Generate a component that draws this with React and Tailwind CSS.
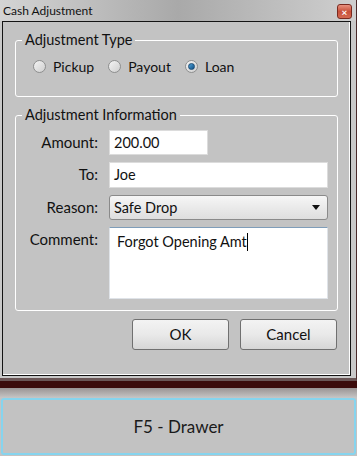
import React from 'react';

const font = { fontFamily: 'Lato, "Noto Sans", sans-serif' };

function Radio({ label, checked }) {
  return (
    <label className="flex items-center gap-[7px]">
      <span className="w-[13px] h-[13px] rounded-full border border-[#8e8f8f] bg-gradient-to-br from-[#f4f4f4] to-[#cfcfcf] flex items-center justify-center">
        {checked && <span className="w-[7px] h-[7px] rounded-full bg-gradient-to-br from-[#4fa3d8] to-[#0e4f86] border border-[#1b4b74]" />}
      </span>
      <span className="text-[14px] text-[#111]">{label}</span>
    </label>
  );
}

function Row({ label, children }) {
  return (
    <div className="flex gap-[11px]">
      <div className="w-[82px] text-right text-[15px] text-[#111] leading-[25px]">{label}</div>
      {children}
    </div>
  );
}

export default function App() {
  return (
    <div className="w-[357px] h-[456px] overflow-hidden bg-[#c3c3c3] flex flex-col" style={font}>
      {/* dialog over dark background */}
      <div className="h-[388px] bg-[#3b0b0b] flex flex-col">
        <div className="w-[357px] h-[381px] bg-[#c9c9c9] border-r border-[#4a2a2a] border-b-[3px] border-b-[#6a5656] flex flex-col">
          {/* title bar */}
          <div className="h-[21px] flex items-center justify-between pl-[3px] pr-[4px] bg-gradient-to-r from-[#d4d4d4] via-[#a9a9a9] to-[#cfcfcf]">
            <span className="text-[12px] text-[#111] leading-none">Cash Adjustment</span>
            <span className="w-[15px] h-[15px] mt-[2px] rounded-[3px] border border-[#7a2a20] bg-gradient-to-b from-[#e8917f] via-[#c8503a] to-[#d46a52] flex items-center justify-center text-white text-[10px] font-bold leading-none">
              ×
            </span>
          </div>

          {/* client area */}
          <div className="mx-[2px] w-[349px] h-[355px] border border-[#141414] bg-[#c3c3c3] shadow-[inset_-1px_-1px_0_#ffffff] px-[12px] pt-[9px] flex flex-col">
            <fieldset className="border border-white rounded-[3px] h-[66px]">
              <legend className="ml-[6px] px-[3px] text-[14.5px] text-[#111] leading-[18px]">Adjustment Type</legend>
              <div className="flex items-center gap-[14px] mt-[7px] pl-[17px]">
                <Radio label="Pickup" />
                <Radio label="Payout" />
                <Radio label="Loan" checked />
              </div>
            </fieldset>

            <fieldset className="mt-[9px] border border-white rounded-[3px] h-[205px] pr-[9px]">
              <legend className="ml-[6px] px-[3px] text-[14.5px] text-[#111] leading-[18px]">Adjustment Information</legend>
              <div className="flex flex-col gap-[7px] mt-[6px]">
                <Row label="Amount:">
                  <div className="w-[99px] h-[25px] bg-white border border-[#dcdcdc] px-[4px] text-[14.5px] leading-[23px] text-[#111]">200.00</div>
                </Row>
                <Row label="To:">
                  <div className="w-[219px] h-[26px] bg-white border border-[#dcdcdc] px-[4px] text-[14.5px] leading-[24px] text-[#111]">Joe</div>
                </Row>
                <Row label="Reason:">
                  <div className="w-[219px] h-[25px] rounded-[3px] border border-[#8a8a8a] bg-gradient-to-b from-[#f6f6f6] to-[#dedede] pl-[4px] pr-[7px] flex items-center justify-between text-[14.5px] text-[#111]">
                    <span>Safe Drop</span>
                    <svg width="8" height="5" viewBox="0 0 8 5"><path d="M0 0h8L4 5z" fill="#111" /></svg>
                  </div>
                </Row>
                <Row label="Comment:">
                  <div className="w-[219px] h-[72px] bg-white border border-[#dfe3e8] border-t-[#7f9db9] px-[7px] pt-[2px] text-[14.5px] leading-[24px] text-[#111] flex items-start">
                    <span>Forgot Opening Amt</span>
                    <span className="w-px h-[18px] bg-black mt-[3px]" />
                  </div>
                </Row>
              </div>
            </fieldset>

            <div className="flex justify-end gap-[11px] mt-[8px] pr-[1px]">
              <button className="w-[97px] h-[31px] rounded-[3px] border border-[#707070] bg-gradient-to-b from-[#f3f3f3] via-[#e9e9e9] to-[#d6d6d6] text-[15px] text-[#111]">OK</button>
              <button className="w-[97px] h-[31px] rounded-[3px] border border-[#707070] bg-gradient-to-b from-[#f3f3f3] via-[#e9e9e9] to-[#d6d6d6] text-[15px] text-[#111]">Cancel</button>
            </div>
          </div>
        </div>
      </div>

      {/* shadow strip */}
      <div className="h-[10px] bg-gradient-to-b from-[#9a9494] to-[#c6c6c6]" />

      {/* F5 button */}
      <div className="px-[1px]">
        <button className="w-full h-[57px] rounded-[3px] border-2 border-[#86d4ee] bg-[#c2c2c2] text-[17px] text-[#1a1a1a]">
          F5 - Drawer
        </button>
      </div>
    </div>
  );
}
